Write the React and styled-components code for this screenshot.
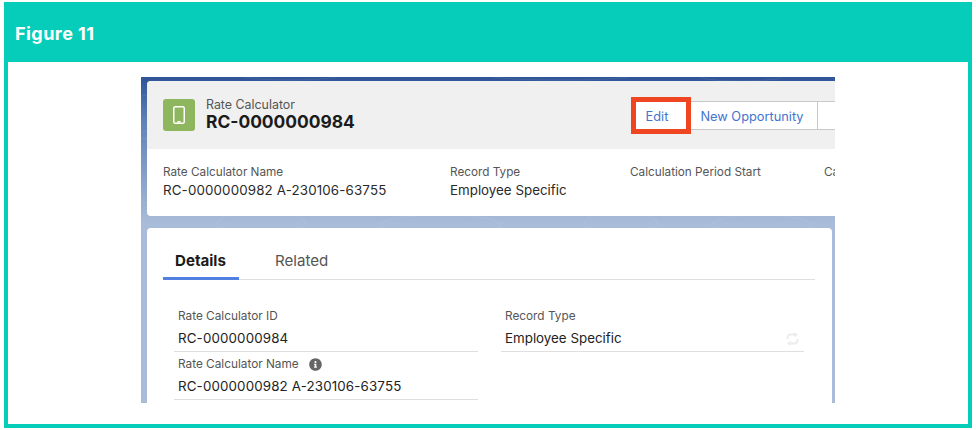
import React from "react";
import styled, { createGlobalStyle } from "styled-components";
import { FaInfoCircle } from "react-icons/fa";

const GlobalStyle = createGlobalStyle`
  html, body { margin: 0; padding: 0; background: #fff; }
  body { font-family: "Inter", "Liberation Sans", sans-serif; }
`;

const Figure = styled.div`
  box-sizing: border-box;
  width: 968px;
  height: 426px;
  margin: 2px 4px;
  border: 4px solid #05cdb9;
  border-top: 0;
  display: flex;
  flex-direction: column;
`;

const Banner = styled.div`
  flex: 0 0 60px;
  box-sizing: border-box;
  margin: 0 -4px;
  padding: 3px 0 0 11px;
  background: #05cdb9;
  color: #fff;
  font-size: 18px;
  font-weight: 700;
  letter-spacing: 0.45px;
  display: flex;
  align-items: center;
`;

const Body = styled.div`
  flex: 1;
  padding: 15px 0 0 133px;
`;

const Shot = styled.div`
  position: relative;
  width: 694px;
  height: 326px;
  overflow: hidden;
  box-sizing: border-box;
  padding: 4px 0 0 6px;
  background: linear-gradient(180deg, #2f5497 0%, #5f82b8 14%, #a9bcd9 45%, #aabcd9 100%);
`;

const Contours = styled.svg`
  position: absolute;
  inset: 0;
  width: 100%;
  height: 100%;
`;

const RecordCard = styled.div`
  position: relative;
  width: 760px;
  height: 135px;
  background: #fff;
  border-radius: 4px;
  overflow: hidden;
`;

const RecordHead = styled.div`
  height: 68px;
  box-sizing: border-box;
  padding-left: 16px;
  background: #f0f0f0;
  display: flex;
  align-items: center;
`;

const AppIcon = styled.div`
  width: 32px;
  height: 32px;
  border-radius: 3px;
  background: #8db65f;
  display: flex;
  align-items: center;
  justify-content: center;
`;

const Titles = styled.div`
  margin: -1px 0 0 11px;
  width: 425px;
`;

const Kicker = styled.div`
  font-size: 12.4px;
  line-height: 15px;
  color: #555;
`;

const RecordName = styled.div`
  font-size: 17.4px;
  line-height: 20px;
  font-weight: 700;
  color: #1b1b1b;
`;

const Actions = styled.div`
  display: flex;
  height: 29px;
  margin-top: 1px;
`;

const ActionButton = styled.button`
  box-sizing: content-box;
  height: 26px;
  width: ${(p) => p.$width}px;
  padding: 1px 4px 0 0;
  border: 1px solid #c9c9c9;
  border-left: 0;
  background: #fff;
  color: #3f74cf;
  font-family: inherit;
  font-size: 12.8px;
`;

const EditButton = styled(ActionButton)`
  position: relative;
  z-index: 1;
  margin: -4px 0;
  height: 26px;
  width: 42px;
  padding: 1px 8px 0 0;
  border: 5px solid #ef4521;
`;

const Highlights = styled.div`
  display: flex;
  padding: 16px 0 0 16px;
`;

const Highlight = styled.div`
  width: ${(p) => p.$width}px;
  flex: none;
`;

const HighlightLabel = styled.div`
  font-size: 11.75px;
  line-height: 14px;
  color: #555;
`;

const HighlightValue = styled.div`
  font-size: 13.35px;
  letter-spacing: ${(p) => (p.$code ? "0.14px" : "0")};
  line-height: 18px;
  margin-top: 2px;
  color: #2a2a2a;
`;

const DetailCard = styled.div`
  position: relative;
  width: 685px;
  height: 200px;
  margin-top: 12px;
  box-sizing: border-box;
  padding: 16px 17px 0 16px;
  background: #fff;
  border-radius: 4px 4px 0 0;
`;

const Tabs = styled.div`
  display: flex;
  height: 35px;
  border-bottom: 1px solid #dfdfdf;
`;

const Tab = styled.div`
  box-sizing: border-box;
  width: ${(p) => p.$width}px;
  height: 36px;
  padding-left: ${(p) => p.$pad}px;
  font-size: 15.1px;
  line-height: 33px;
  font-weight: ${(p) => (p.$active ? 700 : 400)};
  color: ${(p) => (p.$active ? "#1b1b1b" : "#555")};
  border-bottom: ${(p) => (p.$active ? "3px solid #4f80e2" : "0")};
`;

const Columns = styled.div`
  display: grid;
  grid-template-columns: 304px 303px;
  column-gap: 23px;
  margin: 24px 0 0 11px;
`;

const Column = styled.div`
  display: flex;
  flex-direction: column;
`;

const Field = styled.div`
  position: relative;
  box-sizing: border-box;
  padding: ${(p) => (p.$first ? "0" : "5px")} 4px 0;
  margin-top: ${(p) => (p.$first ? "5px" : "0")};
  height: ${(p) => (p.$first ? "43px" : "48px")};
  border-bottom: 1px solid #dfdfdf;
`;

const FieldLabel = styled.div`
  display: flex;
  align-items: center;
  gap: 10px;
  height: 14px;
  font-size: 11.8px;
  line-height: 14px;
  color: #555;
`;

const FieldValue = styled.div`
  margin-top: 6px;
  font-size: 13.35px;
  letter-spacing: ${(p) => (p.$code ? "0.14px" : "0")};
  line-height: 18px;
  color: #222;
`;

const InfoIcon = styled(FaInfoCircle)`
  width: 13px;
  height: 13px;
  color: #666;
`;

const SyncIcon = styled.svg`
  position: absolute;
  right: 5px;
  top: 23px;
  width: 13px;
  height: 14px;
`;

const PhoneIcon = () => (
  <svg width="12" height="18" viewBox="0 0 12 18" fill="none">
    <rect x="0.75" y="0.75" width="10.5" height="16.5" rx="1.6" stroke="#fff" strokeWidth="1.5" />
    <rect x="4.4" y="15" width="3.2" height="1.6" fill="#fff" />
  </svg>
);

export default function App() {
  return (
    <>
      <GlobalStyle />
      <Figure>
        <Banner>Figure 11</Banner>
        <Body>
          <Shot>
            <Contours viewBox="0 0 694 326" fill="none" stroke="#fff" strokeOpacity="0.07">
              <ellipse cx="10" cy="40" rx="34" ry="22" />
              <ellipse cx="8" cy="90" rx="28" ry="36" />
              <ellipse cx="150" cy="-2" rx="50" ry="5" />
              <ellipse cx="420" cy="-1" rx="70" ry="4" />
              <ellipse cx="600" cy="0" rx="40" ry="4" />
              <ellipse cx="120" cy="146" rx="44" ry="12" />
              <ellipse cx="300" cy="148" rx="60" ry="10" />
              <ellipse cx="480" cy="146" rx="36" ry="12" />
              <ellipse cx="620" cy="148" rx="50" ry="10" />
            </Contours>
            <RecordCard>
              <RecordHead>
                <AppIcon>
                  <PhoneIcon />
                </AppIcon>
                <Titles>
                  <Kicker>Rate Calculator</Kicker>
                  <RecordName>RC-0000000984</RecordName>
                </Titles>
                <Actions>
                  <EditButton>Edit</EditButton>
                  <ActionButton $width={122}>New Opportunity</ActionButton>
                  <ActionButton $width={60} />
                </Actions>
              </RecordHead>
              <Highlights>
                <Highlight $width={287}>
                  <HighlightLabel>Rate Calculator Name</HighlightLabel>
                  <HighlightValue $code>RC-0000000982 A-230106-63755</HighlightValue>
                </Highlight>
                <Highlight $width={180}>
                  <HighlightLabel>Record Type</HighlightLabel>
                  <HighlightValue>Employee Specific</HighlightValue>
                </Highlight>
                <Highlight $width={194}>
                  <HighlightLabel>Calculation Period Start</HighlightLabel>
                </Highlight>
                <Highlight $width={12}>
                  <HighlightLabel>Ca</HighlightLabel>
                </Highlight>
              </Highlights>
            </RecordCard>
            <DetailCard>
              <Tabs>
                <Tab $active $width={76} $pad={12}>Details</Tab>
                <Tab $width={120} $pad={36}>Related</Tab>
              </Tabs>
              <Columns>
                <Column>
                  <Field $first>
                    <FieldLabel>Rate Calculator ID</FieldLabel>
                    <FieldValue $code>RC-0000000984</FieldValue>
                  </Field>
                  <Field>
                    <FieldLabel>
                      Rate Calculator Name
                      <InfoIcon />
                    </FieldLabel>
                    <FieldValue $code>RC-0000000982 A-230106-63755</FieldValue>
                  </Field>
                </Column>
                <Column>
                  <Field $first>
                    <FieldLabel>Record Type</FieldLabel>
                    <FieldValue>Employee Specific</FieldValue>
                    <SyncIcon viewBox="0 0 13 14" fill="none" stroke="#ececec" strokeWidth="1.8">
                      <path d="M1.5 7V5.5a3 3 0 0 1 3-3H8M8 1l2.5 1.5L8 4.3" />
                      <path d="M11.5 7v1.5a3 3 0 0 1-3 3H5M5 9.7 2.5 11.5 5 13" />
                    </SyncIcon>
                  </Field>
                </Column>
              </Columns>
            </DetailCard>
          </Shot>
        </Body>
      </Figure>
    </>
  );
}
